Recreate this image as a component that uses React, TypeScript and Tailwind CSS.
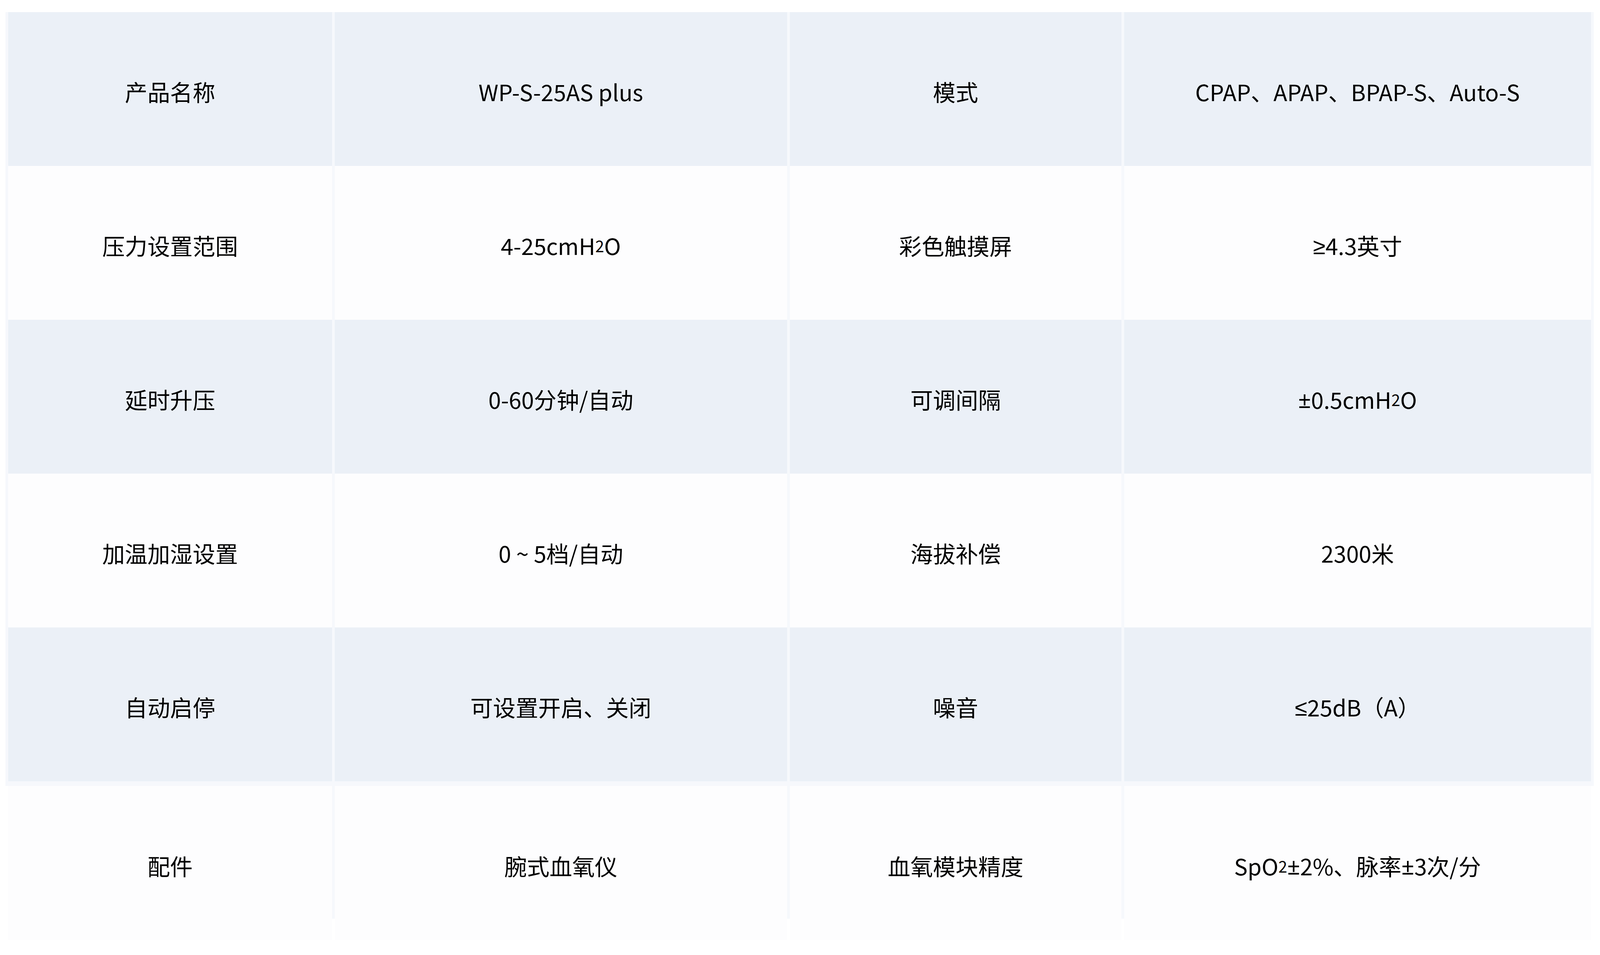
import React from "react";

type Row = [string, React.ReactNode, string, React.ReactNode];

// widths in vw and heights in vh, so the sheet fills the frame in the reference's proportions
const Sub = ({ children }: { children: React.ReactNode }) => (
  <span className="text-[0.7em]">{children}</span>
);

// math signs in a Latin face, so they stay narrow like the reference
const Sym = ({ children }: { children: React.ReactNode }) => (
  <span style={{ fontFamily: '"Noto Sans", sans-serif' }}>{children}</span>
);

const rows: Row[] = [
  ["产品名称", "WP-S-25AS plus", "模式", "CPAP、APAP、BPAP-S、Auto-S"],
  [
    "压力设置范围",
    <>
      4-25cmH<Sub>2</Sub>O
    </>,
    "彩色触摸屏",
    <>
      <Sym>≥</Sym>4.3英寸
    </>,
  ],
  [
    "延时升压",
    "0-60分钟/自动",
    "可调间隔",
    <>
      <Sym>±</Sym>0.5cmH<Sub>2</Sub>O
    </>,
  ],
  ["加温加湿设置", "0 ~ 5档/自动", "海拔补偿", "2300米"],
  [
    "自动启停",
    "可设置开启、关闭",
    "噪音",
    <>
      <Sym>≤</Sym>25dB（A）
    </>,
  ],
];

const lastRow: Row = [
  "配件",
  "腕式血氧仪",
  "血氧模块精度",
  <>
    SpO<Sub>2</Sub>
    <Sym>±</Sym>2%、脉率<Sym>±</Sym>3次/分
  </>,
];

const widths = ["w-[20.238vw]", "w-[28.27vw]", "w-[20.733vw]", "w-[29.176vw]"];

const Strip = ({ className = "" }: { className?: string }) => (
  <div className={`w-[0.17vw] shrink-0 bg-[#f6f8fc] ${className}`} />
);

const Cell = ({
  children,
  width,
  shaded,
}: {
  children: React.ReactNode;
  width: string;
  shaded: boolean;
}) => (
  <div
    className={`${width} shrink-0 flex items-center justify-center pt-[0.6vh] ${
      shaded ? "bg-[#ebf0f7]" : "bg-[#fdfdfe]"
    }`}
  >
    {children}
  </div>
);

export default function App() {
  return (
    <div
      className="w-full h-screen overflow-hidden bg-white pt-[1.267vh] pl-[0.34vw] text-black text-[1.414vw] font-normal leading-none"
      style={{ fontFamily: '"Noto Sans CJK SC", "Noto Sans", sans-serif' }}
    >
      {rows.map((row, i) => (
        <div key={i} className="flex h-[16.108vh]">
          <Strip />
          {row.map((cell, j) => (
            <React.Fragment key={j}>
              <Cell width={widths[j]} shaded={i % 2 === 0}>
                {cell}
              </Cell>
              <Strip />
            </React.Fragment>
          ))}
        </div>
      ))}

      <div className="w-[99.264vw] h-[0.49vh] bg-[#f6f8fc]" />

      <div className="flex h-[16.149vh]">
        <div className="w-[0.17vw] shrink-0" />
        {lastRow.map((cell, j) => (
          <React.Fragment key={j}>
            <Cell width={widths[j]} shaded={false}>
              {cell}
            </Cell>
            {j < 3 ? (
              <Strip className="h-[13.9vh] self-start" />
            ) : (
              <div className="w-[0.17vw] shrink-0" />
            )}
          </React.Fragment>
        ))}
      </div>
    </div>
  );
}
